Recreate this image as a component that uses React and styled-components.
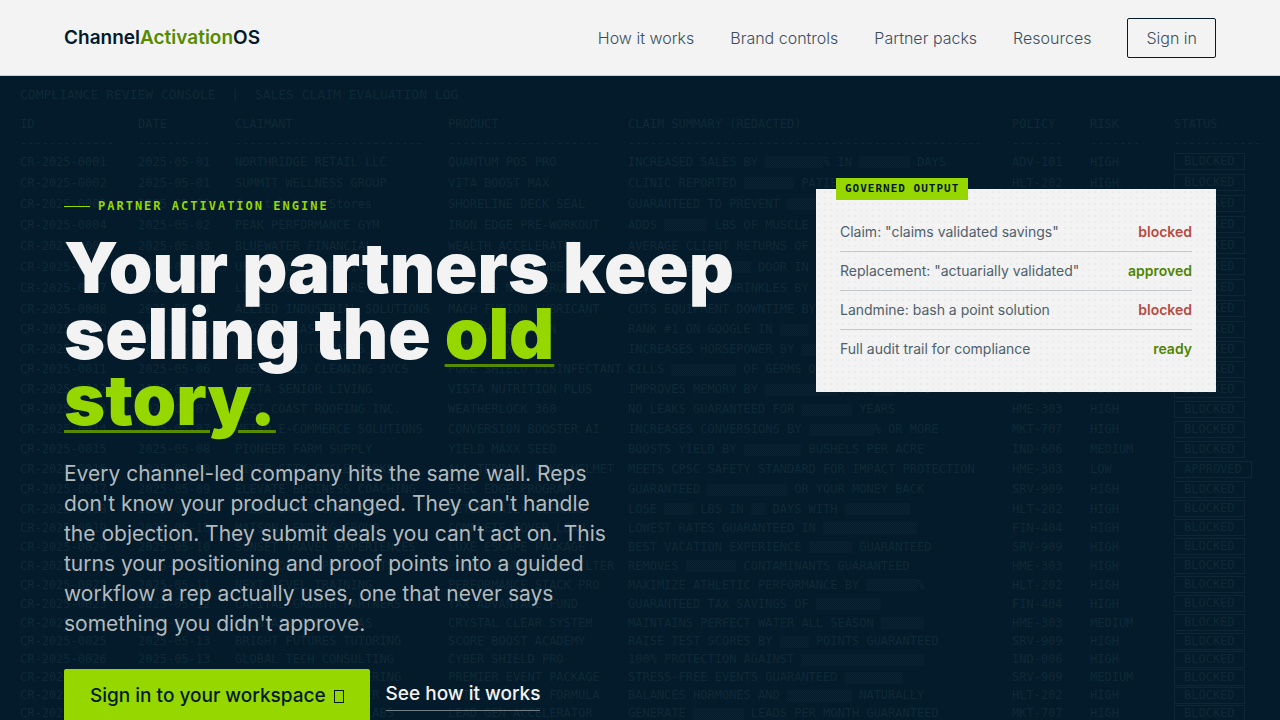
import React from 'react';
import styled, { createGlobalStyle } from 'styled-components';

const logGroups = [
  {
    height: 21,
    rows: [
      ['05-01', 'NORTHRIDGE RETAIL LLC', 'QUANTUM POS PRO', 'INCREASED SALES BY [8]% IN [7] DAYS', 'ADV-101', 'HIGH'],
      ['05-01', 'SUMMIT WELLNESS GROUP', 'VITA BOOST MAX', 'CLINIC REPORTED [7] PATIENTS', 'HLT-202', 'HIGH'],
      ['05-02', 'Coastal Home Stores', 'SHORELINE DECK SEAL', 'GUARANTEED TO PREVENT [8]', 'HME-303', 'HIGH'],
      ['05-02', 'PEAK PERFORMANCE GYM', 'IRON EDGE PRE-WORKOUT', 'ADDS [6] LBS OF MUSCLE IN [3]', 'HLT-202', 'HIGH'],
      ['05-03', 'BLUEWATER FINANCIAL', 'WEALTH ACCELERATOR', 'AVERAGE CLIENT RETURNS OF [6]', 'FIN-404', 'HIGH'],
      ['05-03', 'URBAN HOME ROBOTICS', 'DOOR GUARD PROBE', 'STOPS EVERY [5] DOOR IN [6]', 'HME-303', 'HIGH'],
      ['05-04', 'LUMINOUS SKIN CARE', 'AGELESS NEW SERUM', 'REVERSES [4] WRINKLES BY [5]', 'HLT-202', 'HIGH'],
      ['05-04', 'ALLIED INDUSTRIAL SOLUTIONS', 'MACH FUSION LUBRICANT', 'CUTS EQUIPMENT DOWNTIME BY [6]', 'IND-606', 'HIGH'],
    ],
  },
  {
    height: 20,
    rows: [
      ['05-05', 'DIGITAL CASCADE', 'GROWTH SEO PLAN', 'RANK #1 ON GOOGLE IN [4] DAYS', 'MKT-707', 'HIGH'],
      ['05-05', 'PREMIER AUTO PARTS', 'TURBO MAX', 'INCREASES HORSEPOWER BY [5]', 'IND-606', 'HIGH'],
      ['05-06', 'GREENFIELD CLEANING SVCS', 'PURE SHIELD DISINFECTANT', 'KILLS [9] OF GERMS ON [5]', 'HLT-202', 'HIGH'],
      ['05-06', 'VISTA SENIOR LIVING', 'VISTA NUTRITION PLUS', 'IMPROVES MEMORY BY [10]% IN [3] DAYS', 'HLT-202', 'HIGH'],
      ['05-07', 'WEST COAST ROOFING INC.', 'WEATHERLOCK 360', 'NO LEAKS GUARANTEED FOR [7] YEARS', 'HME-303', 'HIGH'],
      ['05-07', 'METRO E-COMMERCE SOLUTIONS', 'CONVERSION BOOSTER AI', 'INCREASES CONVERSIONS BY [9]% OR MORE', 'MKT-707', 'HIGH'],
      ['05-08', 'PIONEER FARM SUPPLY', 'YIELD MAXX SEED', 'BOOSTS YIELD BY [8] BUSHELS PER ACRE', 'IND-606', 'MEDIUM'],
      ['05-08', 'RIVER CITY CYCLE WORKS', 'ALL TERRAIN BIKE HELMET', 'MEETS CPSC SAFETY STANDARD FOR IMPACT PROTECTION', 'HME-303', 'LOW', 'APPROVED'],
      ['05-09', 'ELEVATE BUSINESS COACHING', 'EXEC EDGE PROGRAM', 'GUARANTEED [11] OR YOUR MONEY BACK', 'SRV-909', 'HIGH'],
    ],
  },
  {
    height: 19,
    rows: [
      ['05-09', 'FRESH START ORGANICS', 'DETOX DAILY CLEANSE', 'LOSE [4] LBS IN [2] DAYS WITH [9]', 'HLT-202', 'HIGH'],
      ['05-10', 'MAISON LENDING GROUP', 'COMPLETE COVER LOAN', 'LOWEST RATES GUARANTEED IN [13]', 'FIN-404', 'HIGH'],
      ['05-10', 'SUNSET TRAVEL EXPERIENCES', 'LUXE ESCAPE PACKAGE', 'BEST VACATION EXPERIENCE [6] GUARANTEED', 'SRV-909', 'HIGH'],
      ['05-11', 'HOME ZONE IMPROVEMENTS', 'POWER TOWN WATER FILTER', 'REMOVES [7] CONTAMINANTS GUARANTEED', 'HME-303', 'HIGH'],
      ['05-11', 'NEXT LEVEL TRAINING', 'PERFORMANCE STACK PRO', 'MAXIMIZE ATHLETIC PERFORMANCE BY [7]%', 'HLT-202', 'HIGH'],
      ['05-12', 'CAPITAL GROWTH PARTNERS', 'TAX ADVANTAGE FUND', 'GUARANTEED TAX SAVINGS OF [9]', 'FIN-404', 'HIGH'],
      ['05-12', 'MOUNTAIN CREEK SPAS', 'CRYSTAL CLEAR SYSTEM', 'MAINTAINS PERFECT WATER ALL SEASON [6]', 'HME-303', 'MEDIUM'],
    ],
  },
  {
    height: 18,
    rows: [
      ['05-13', 'BRIGHT FUTURES TUTORING', 'SCORE BOOST ACADEMY', 'RAISE TEST SCORES BY [4] POINTS GUARANTEED', 'SRV-909', 'HIGH'],
      ['05-13', 'GLOBAL TECH CONSULTING', 'CYBER SHIELD PRO', '100% PROTECTION AGAINST [17]', 'IND-006', 'HIGH'],
      ['05-14', 'GRAND OCCASION CATERING', 'PREMIER EVENT PACKAGE', 'STRESS-FREE EVENTS GUARANTEED [8]', 'SRV-909', 'MEDIUM'],
      ['05-14', 'VITAL BALANCE CENTER', 'VITAL BALANCE FORMULA', 'BALANCES HORMONES AND [9] NATURALLY', 'HLT-202', 'HIGH'],
      ['05-15', 'DIGITAL MARKETING LABS', 'LEAD GEN ACCELERATOR', 'GENERATE [7] LEADS PER MONTH GUARANTEED', 'MKT-707', 'HIGH'],
    ],
  },
];

const columns = [
  { name: 'ID', width: 118, dashes: 13 },
  { name: 'DATE', width: 97, dashes: 10 },
  { name: 'CLAIMANT', width: 213, dashes: 26 },
  { name: 'PRODUCT', width: 180, dashes: 21 },
  { name: 'CLAIM SUMMARY (REDACTED)', width: 384, dashes: 49 },
  { name: 'POLICY', width: 78, dashes: 7 },
  { name: 'RISK', width: 84, dashes: 7 },
  { name: 'STATUS', width: 106, dashes: 12 },
];

const claims = [
  { text: 'Claim: "claims validated savings"', status: 'blocked' },
  { text: 'Replacement: "actuarially validated"', status: 'approved' },
  { text: 'Landmine: bash a point solution', status: 'blocked' },
  { text: 'Full audit trail for compliance', status: 'ready' },
];

// "[n]" in a summary stands for a redacted block n characters wide
function Summary({ text }) {
  return text.split(/(\[\d+\])/).map((part, i) =>
    part.startsWith('[') ? <Redacted key={i} $chars={parseInt(part.slice(1), 10)} /> : part
  );
}

function ReviewLog() {
  let id = 0;
  return (
    <LogLayer aria-hidden="true">
      <LogTitle>COMPLIANCE REVIEW CONSOLE&nbsp; |&nbsp; SALES CLAIM EVALUATION LOG</LogTitle>
      <LogTable>
        <colgroup>
          {columns.map((col) => <LogCol key={col.name} $width={col.width} />)}
        </colgroup>
        <thead>
          <LogRow $height={22}>
            {columns.map((col) => <th key={col.name}>{col.name}</th>)}
          </LogRow>
          <LogRow $height={16}>
            {columns.map((col) => <td key={col.name}>{'-'.repeat(col.dashes)}</td>)}
          </LogRow>
        </thead>
        {logGroups.map((group) => (
          <tbody key={group.height}>
            {group.rows.map(([date, claimant, product, summary, policy, risk, status = 'BLOCKED']) => {
              id += 1;
              return (
                <LogRow key={product} $height={group.height}>
                  <td>CR-2025-{String(id).padStart(4, '0')}</td>
                  <td>2025-{date}</td>
                  <td>{claimant}</td>
                  <td>{product}</td>
                  <td><Summary text={summary} /></td>
                  <td>{policy}</td>
                  <td>{risk}</td>
                  <td><Stamp>{status}</Stamp></td>
                </LogRow>
              );
            })}
          </tbody>
        ))}
      </LogTable>
    </LogLayer>
  );
}

function App() {
  return (
    <>
      <GlobalStyle />
      <Header>
        <Logo href="#home">Channel<span>Activation</span>OS</Logo>
        <Nav>
          <NavLink href="#how">How it works</NavLink>
          <NavLink href="#brand">Brand controls</NavLink>
          <NavLink href="#packs">Partner packs</NavLink>
          <NavLink href="#resources">Resources</NavLink>
          <SignIn href="#signin">Sign in</SignIn>
        </Nav>
      </Header>
      <Hero>
        <ReviewLog />
        <HeroContent>
          <Copy>
            <Eyebrow>Partner activation engine</Eyebrow>
            <Title>Your partners keep selling the <em>old story.</em></Title>
            <Lead>
              Every channel-led company hits the same wall. Reps don't know your product changed.
              They can't handle the objection. They submit deals you can't act on. This turns your
              positioning and proof points into a guided workflow a rep actually uses, one that
              never says something you didn't approve.
            </Lead>
            <Actions>
              <PrimaryLink href="#signin">Sign in to your workspace <Glyph /></PrimaryLink>
              <TextLink href="#how">See how it works</TextLink>
            </Actions>
          </Copy>
          <Card>
            <CardLabel>Governed output</CardLabel>
            <ClaimList>
              {claims.map((claim) => (
                <ClaimRow key={claim.text}>
                  <span>{claim.text}</span>
                  <Status $blocked={claim.status === 'blocked'}>{claim.status}</Status>
                </ClaimRow>
              ))}
            </ClaimList>
          </Card>
        </HeroContent>
      </Hero>
    </>
  );
}

const GlobalStyle = createGlobalStyle`
    *{
        box-sizing:border-box;
    }

    body{
        margin:0;
        background-color:#031b2a;
        font-family:Inter, "Liberation Sans", sans-serif;
        color:#031b2a;
    }

    a{
        color:inherit;
        text-decoration:none;
    }
`;

const Header = styled.header`
    display:flex;
    align-items:center;
    justify-content:space-between;
    height:76px;
    padding:0 64px;
    background-color:#f3f3f3;
    border-bottom:1px solid #c5d3d0;
`;

const Logo = styled.a`
    font-size:19px;
    font-weight:600;

    span{
        color:#568b00;
    }
`;

const Nav = styled.nav`
    display:flex;
    align-items:center;
    gap:36px;
`;

const NavLink = styled.a`
    font-size:16px;
    font-weight:300;
    color:#3b4e5a;
`;

const SignIn = styled(NavLink)`
    padding:0 18px;
    line-height:38px;
    border:1px solid #031b2a;
    border-radius:2px;
`;

const Hero = styled.section`
    position:relative;
    overflow:hidden;
    background-color:#031b2a;
`;

const LogLayer = styled.div`
    position:absolute;
    inset:0;
    padding:8px 20px;
    overflow:hidden;
    font-family:"DejaVu Sans Mono", monospace;
    font-size:12px;
    color:#102938;
`;

const LogTitle = styled.p`
    margin:0 0 8px;
    font-size:13px;
    line-height:21px;
`;

const LogTable = styled.table`
    table-layout:fixed;
    width:100%;
    border-collapse:collapse;
    white-space:nowrap;

    th, td{
        padding:0;
        font-weight:400;
        text-align:left;
        line-height:16px;
    }
`;

const LogCol = styled.col`
    width:${(props) => props.$width}px;
`;

const LogRow = styled.tr`
    height:${(props) => props.$height}px;
`;

const Redacted = styled.span`
    display:inline-block;
    width:${(props) => props.$chars}ch;
    height:12px;
    vertical-align:middle;
    background-image:repeating-conic-gradient(#0b2332 0 25%, transparent 0 50%);
    background-size:2px 2px;
`;

const Stamp = styled.span`
    display:inline-block;
    padding:0 9px;
    border:1px solid #0e2635;
    line-height:15px;
    vertical-align:middle;
`;

const HeroContent = styled.div`
    position:relative;
    display:grid;
    grid-template-columns:minmax(0, 1fr) 400px;
    gap:64px;
    align-items:start;
    padding:113px 64px 96px;
`;

const Copy = styled.div`
    padding-top:8px;
`;

const Eyebrow = styled.p`
    display:flex;
    align-items:center;
    gap:8px;
    margin:0 0 20px;
    font-family:"DejaVu Sans Mono", monospace;
    font-size:12px;
    font-weight:700;
    line-height:18px;
    letter-spacing:2px;
    text-transform:uppercase;
    color:#97d700;

    &::before{
        content:"";
        width:26px;
        height:1px;
        background-color:#97d700;
    }
`;

const Title = styled.h1`
    margin:0 0 26px;
    font-size:70px;
    font-weight:900;
    line-height:66px;
    color:#f3f3f3;

    em{
        font-style:normal;
        color:#97d700;
        text-decoration:underline;
        text-decoration-color:#568b00;
        text-decoration-thickness:3px;
        text-underline-offset:5px;
    }
`;

const Lead = styled.p`
    max-width:550px;
    margin:0 0 30px;
    font-size:21px;
    line-height:30px;
    color:#b3babe;
`;

const Actions = styled.div`
    display:flex;
    align-items:center;
    gap:16px;
`;

const PrimaryLink = styled.a`
    display:flex;
    align-items:center;
    gap:8px;
    padding:0 26px;
    background-color:#97d700;
    border-radius:2px;
    font-size:19px;
    font-weight:500;
    line-height:54px;
`;

const Glyph = styled.span`
    width:10px;
    height:13px;
    border:1px solid #031b2a;
`;

const TextLink = styled.a`
    padding-bottom:4px;
    border-bottom:1px solid #6f7d86;
    font-size:19px;
    font-weight:500;
    line-height:24px;
    color:#f3f3f3;
`;

const Card = styled.aside`
    position:relative;
    padding:24px;
    background-color:#f3f3f3;
    background-image:radial-gradient(#ebeced 1px, transparent 1px);
    background-size:6px 6px;
`;

const CardLabel = styled.p`
    position:absolute;
    top:-11px;
    left:20px;
    margin:0;
    padding:0 9px;
    background-color:#97d700;
    font-family:"DejaVu Sans Mono", monospace;
    font-size:11px;
    font-weight:700;
    line-height:22px;
    letter-spacing:1px;
    text-transform:uppercase;
`;

const ClaimList = styled.ul`
    margin:0;
    padding:0;
    list-style:none;
`;

const ClaimRow = styled.li`
    display:flex;
    justify-content:space-between;
    padding:10px 0;
    font-size:14px;
    line-height:18px;
    color:#4f606b;

    &:not(:last-child){
        border-bottom:1px solid #c4c8cb;
    }
`;

const Status = styled.span`
    font-weight:600;
    color:${(props) => (props.$blocked ? '#b84a3e' : '#4f8500')};
`;

export default App
